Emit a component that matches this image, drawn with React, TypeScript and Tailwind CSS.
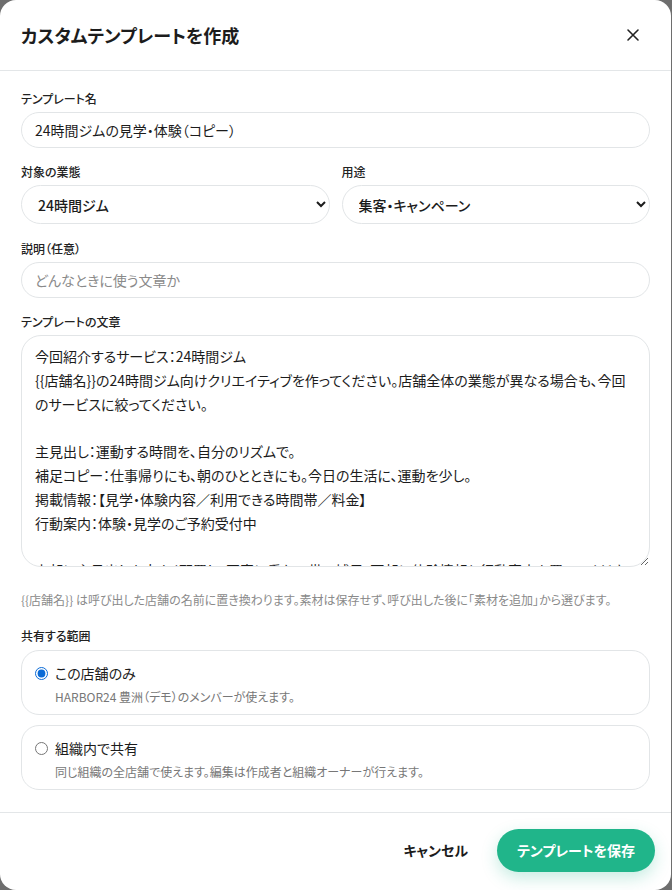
import { useState } from "react";

const bodyText = `今回紹介するサービス：24時間ジム
{{店舗名}}の24時間ジム向けクリエイティブを作ってください。店舗全体の業態が異なる場合も、今回のサービスに絞ってください。

主見出し：運動する時間を、自分のリズムで。
補足コピー：仕事帰りにも、朝のひとときにも。今日の生活に、運動を少し。
掲載情報：【見学・体験内容／利用できる時間帯／料金】
行動案内：体験・見学のご予約受付中

上部に主見出しを大きく配置し、写真に重ねて帯で補足、下部に体験情報と行動案内を置いてください。`;

function Label({ children }: { children: React.ReactNode }) {
  return <div className="text-[12px] font-medium text-[#222] mb-[5px] leading-[16px]">{children}</div>;
}

export default function App() {
  const [scope, setScope] = useState("store");
  return (
    <div
      className="w-[672px] h-[890px] bg-[#6e6e6e] [font-feature-settings:'palt']"
      style={{ fontFamily: '"Noto Sans CJK JP", "Noto Sans", sans-serif' }}
    >
      <div className="w-[671px] h-[890px] bg-white rounded-[16px] flex flex-col overflow-hidden">
        {/* ヘッダー */}
        <div className="h-[71px] shrink-0 flex items-center justify-between pl-[21px] pr-[31px] border-b border-[#e3e6e8]">
          <h2 className="text-[18px] font-bold text-[#1c1c1c]">カスタムテンプレートを作成</h2>
          <button className="text-[#222]">
            <svg width="14" height="14" viewBox="0 0 14 14" fill="none" stroke="currentColor" strokeWidth="1.6" strokeLinecap="round">
              <path d="M2 2l10 10M12 2L2 12" />
            </svg>
          </button>
        </div>

        {/* 本文 */}
        <div className="flex-1 px-[21px] pt-[20px]">
          <Label>テンプレート名</Label>
          <input
            defaultValue="24時間ジムの見学・体験（コピー）"
            className="w-full h-[36px] rounded-full border border-[#e2e5e7] px-[13px] text-[14px] text-[#1c1c1c] outline-none"
          />

          <div className="grid grid-cols-2 gap-[12px] mt-[16px]">
            <div>
              <Label>対象の業態</Label>
              <select className="w-full h-[39px] rounded-full border border-[#e2e5e7] bg-white pl-[12px] pr-[6px] text-[14px] font-medium text-[#1c1c1c]">
                <option>24時間ジム</option>
              </select>
            </div>
            <div>
              <Label>用途</Label>
              <select className="w-full h-[39px] rounded-full border border-[#e2e5e7] bg-white pl-[12px] pr-[6px] text-[14px] font-medium text-[#1c1c1c]">
                <option>集客・キャンペーン</option>
              </select>
            </div>
          </div>

          <div className="mt-[17px]">
            <Label>説明（任意）</Label>
            <input
              placeholder="どんなときに使う文章か"
              className="w-full h-[36px] rounded-full border border-[#e2e5e7] px-[13px] text-[14px] text-[#1c1c1c] placeholder:text-[#8a8a8a] outline-none"
            />
          </div>

          <div className="mt-[16px]">
            <Label>テンプレートの文章</Label>
            <textarea
              defaultValue={bodyText}
              className="w-full h-[232px] rounded-[20px] border border-[#e2e5e7] px-[13px] pt-[9px] pb-0 text-[14px] leading-[23.8px] text-[#1c1c1c] outline-none overflow-hidden resize-y block"
            />
          </div>

          <p className="mt-[25px] text-[12px] text-[#8a8a8a] leading-[16px]">
            {"{{店舗名}}"} は呼び出した店舗の名前に置き換わります。素材は保存せず、呼び出した後に「素材を追加」から選びます。
          </p>

          <div className="mt-[20px]">
            <Label>共有する範囲</Label>
            <div className="flex flex-col gap-[10px] mt-[6px]">
              <label className="block h-[65px] rounded-[18px] border border-[#e2e5e7] px-[13px] pt-[12px] cursor-pointer">
                <div className="flex items-center gap-[7px]">
                  <input
                    type="radio"
                    name="scope"
                    checked={scope === "store"}
                    onChange={() => setScope("store")}
                    className="w-[13px] h-[13px] accent-[#0b6bd6]"
                  />
                  <span className="text-[14px] text-[#1c1c1c] leading-[20px]">この店舗のみ</span>
                </div>
                <div className="pl-[20px] text-[12px] text-[#777] leading-[18px] mt-[5px]">
                  HARBOR24 豊洲（デモ）のメンバーが使えます。
                </div>
              </label>
              <label className="block h-[65px] rounded-[18px] border border-[#e2e5e7] px-[13px] pt-[12px] cursor-pointer">
                <div className="flex items-center gap-[7px]">
                  <input
                    type="radio"
                    name="scope"
                    checked={scope === "org"}
                    onChange={() => setScope("org")}
                    className="w-[13px] h-[13px] accent-[#0b6bd6]"
                  />
                  <span className="text-[14px] text-[#1c1c1c] leading-[20px]">組織内で共有</span>
                </div>
                <div className="pl-[20px] text-[12px] text-[#777] leading-[18px] mt-[5px]">
                  同じ組織の全店舗で使えます。編集は作成者と組織オーナーが行えます。
                </div>
              </label>
            </div>
          </div>
        </div>

        {/* フッター */}
        <div className="h-[78px] shrink-0 border-t border-[#e3e6e8] flex items-center justify-end gap-[29px] pl-[21px] pr-[16px] pb-[2px]">
          <button className="text-[14px] font-bold text-[#1c1c1c]">キャンセル</button>
          <button className="h-[43px] px-[20px] rounded-full bg-[#20b58a] text-white text-[14px] font-bold shadow-[0_6px_16px_rgba(32,181,138,0.25)]">
            テンプレートを保存
          </button>
        </div>
      </div>
    </div>
  );
}
